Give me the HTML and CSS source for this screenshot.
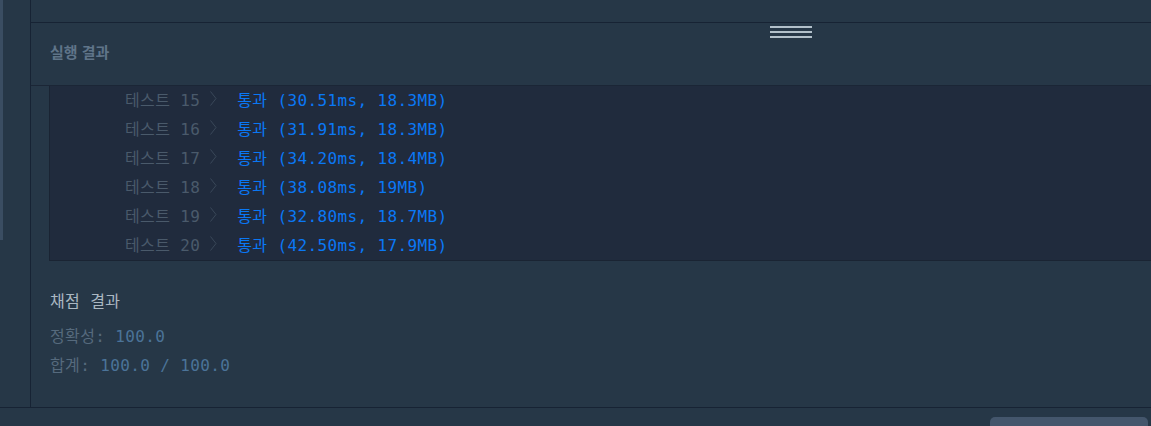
FILE: index.html
```html
<!DOCTYPE html>
<html lang="ko">
<head>
<meta charset="utf-8">
<title>실행 결과</title>
<link rel="stylesheet" href="styles.css">
</head>
<body>
<div class="app">
  <div class="workspace">
    <div class="gutter"><div class="thumb"></div></div>
    <div class="panel">
      <div class="panel-top"></div>
      <div class="result-header">
        <h2 class="result-title">실행 결과</h2>
        <div class="handle"><span></span><span></span><span></span></div>
      </div>
      <div class="output-wrap">
        <div class="output">
          <div class="row"><span class="label">테스트 15</span><svg class="chev" width="7" height="15" viewBox="0 0 7 15"><polyline points="0.5,0.5 6,7.5 0.5,14.5"/></svg><span class="passed">통과 (30.51ms, 18.3MB)</span></div>
          <div class="row"><span class="label">테스트 16</span><svg class="chev" width="7" height="15" viewBox="0 0 7 15"><polyline points="0.5,0.5 6,7.5 0.5,14.5"/></svg><span class="passed">통과 (31.91ms, 18.3MB)</span></div>
          <div class="row"><span class="label">테스트 17</span><svg class="chev" width="7" height="15" viewBox="0 0 7 15"><polyline points="0.5,0.5 6,7.5 0.5,14.5"/></svg><span class="passed">통과 (34.20ms, 18.4MB)</span></div>
          <div class="row"><span class="label">테스트 18</span><svg class="chev" width="7" height="15" viewBox="0 0 7 15"><polyline points="0.5,0.5 6,7.5 0.5,14.5"/></svg><span class="passed">통과 (38.08ms, 19MB)</span></div>
          <div class="row"><span class="label">테스트 19</span><svg class="chev" width="7" height="15" viewBox="0 0 7 15"><polyline points="0.5,0.5 6,7.5 0.5,14.5"/></svg><span class="passed">통과 (32.80ms, 18.7MB)</span></div>
          <div class="row"><span class="label">테스트 20</span><svg class="chev" width="7" height="15" viewBox="0 0 7 15"><polyline points="0.5,0.5 6,7.5 0.5,14.5"/></svg><span class="passed">통과 (42.50ms, 17.9MB)</span></div>
        </div>
      </div>
      <div class="score">
        <div class="score-title">채점 결과</div>
        <div class="score-line"><span class="key">정확성: </span><span class="val">100.0</span></div>
        <div class="score-line"><span class="key">합계: </span><span class="val">100.0 / 100.0</span></div>
      </div>
    </div>
  </div>
  <div class="bottom-bar">
    <div class="bottom-btn"></div>
  </div>
</div>
</body>
</html>
```

FILE: styles.css
```css
html, body {
  margin: 0;
  padding: 0;
}
body {
  width: 1151px;
  height: 426px;
  overflow: hidden;
  background: #263747;
  font-family: "DejaVu Sans Mono", "Noto Sans CJK KR", monospace;
}
.app {
  display: flex;
  flex-direction: column;
  height: 426px;
}
.workspace {
  display: flex;
  height: 407px;
  border-bottom: 1px solid #172334;
  flex-shrink: 0;
}
.gutter {
  width: 30px;
  flex-shrink: 0;
}
.thumb {
  width: 3px;
  height: 240px;
  background: #3a4d62;
}
.panel {
  flex: 1;
  border-left: 1px solid #172334;
  min-width: 0;
}
.panel-top {
  height: 22px;
  border-bottom: 1px solid #172334;
}
.result-header {
  position: relative;
  height: 56px;
  padding-bottom: 6px;
  border-bottom: 1px solid #1b2636;
  display: flex;
  align-items: center;
  padding-left: 19px;
}
.result-title {
  margin: 0;
  font-family: "Noto Sans CJK KR", sans-serif;
  font-size: 15px;
  font-weight: 700;
  color: #5f7489;
}
.handle {
  position: absolute;
  left: 739px;
  top: 3px;
  width: 42px;
  display: flex;
  flex-direction: column;
  gap: 3px;
}
.handle span {
  display: block;
  height: 2px;
  background: #b2c0ca;
}
.output-wrap {
  padding-left: 18px;
}
.output {
  background: #202b3d;
  border-left: 1px solid #1a2433;
  border-bottom: 1px solid #1a2433;
}
.row {
  height: 25px;
  padding-bottom: 4px;
  display: flex;
  align-items: center;
  padding-left: 75px;
  font-size: 16px;
  letter-spacing: 0.37px;
}
.label {
  white-space: pre;
  color: #4a5a6b;
}
.chev {
  margin-left: 10px;
  margin-right: 20px;
  fill: none;
  stroke: #3a4859;
  stroke-width: 1;
}
.passed {
  white-space: pre;
  color: #0a78f5;
}
.score {
  padding: 26px 0 0 19px;
  font-size: 16px;
  letter-spacing: 0.37px;
}
.score-title {
  height: 29px;
  line-height: 29px;
  color: #aab7c2;
  margin-bottom: 6px;
}
.score-line {
  height: 29px;
  line-height: 29px;
  white-space: pre;
}
.key {
  color: #566a7d;
}
.val {
  color: #4b7398;
}
.bottom-bar {
  flex: 1;
  display: flex;
  justify-content: flex-end;
  padding-top: 9px;
  padding-right: 3px;
  overflow: hidden;
}
.bottom-btn {
  width: 158px;
  height: 20px;
  border-radius: 5px 5px 0 0;
  background: #44566c;
}
```
